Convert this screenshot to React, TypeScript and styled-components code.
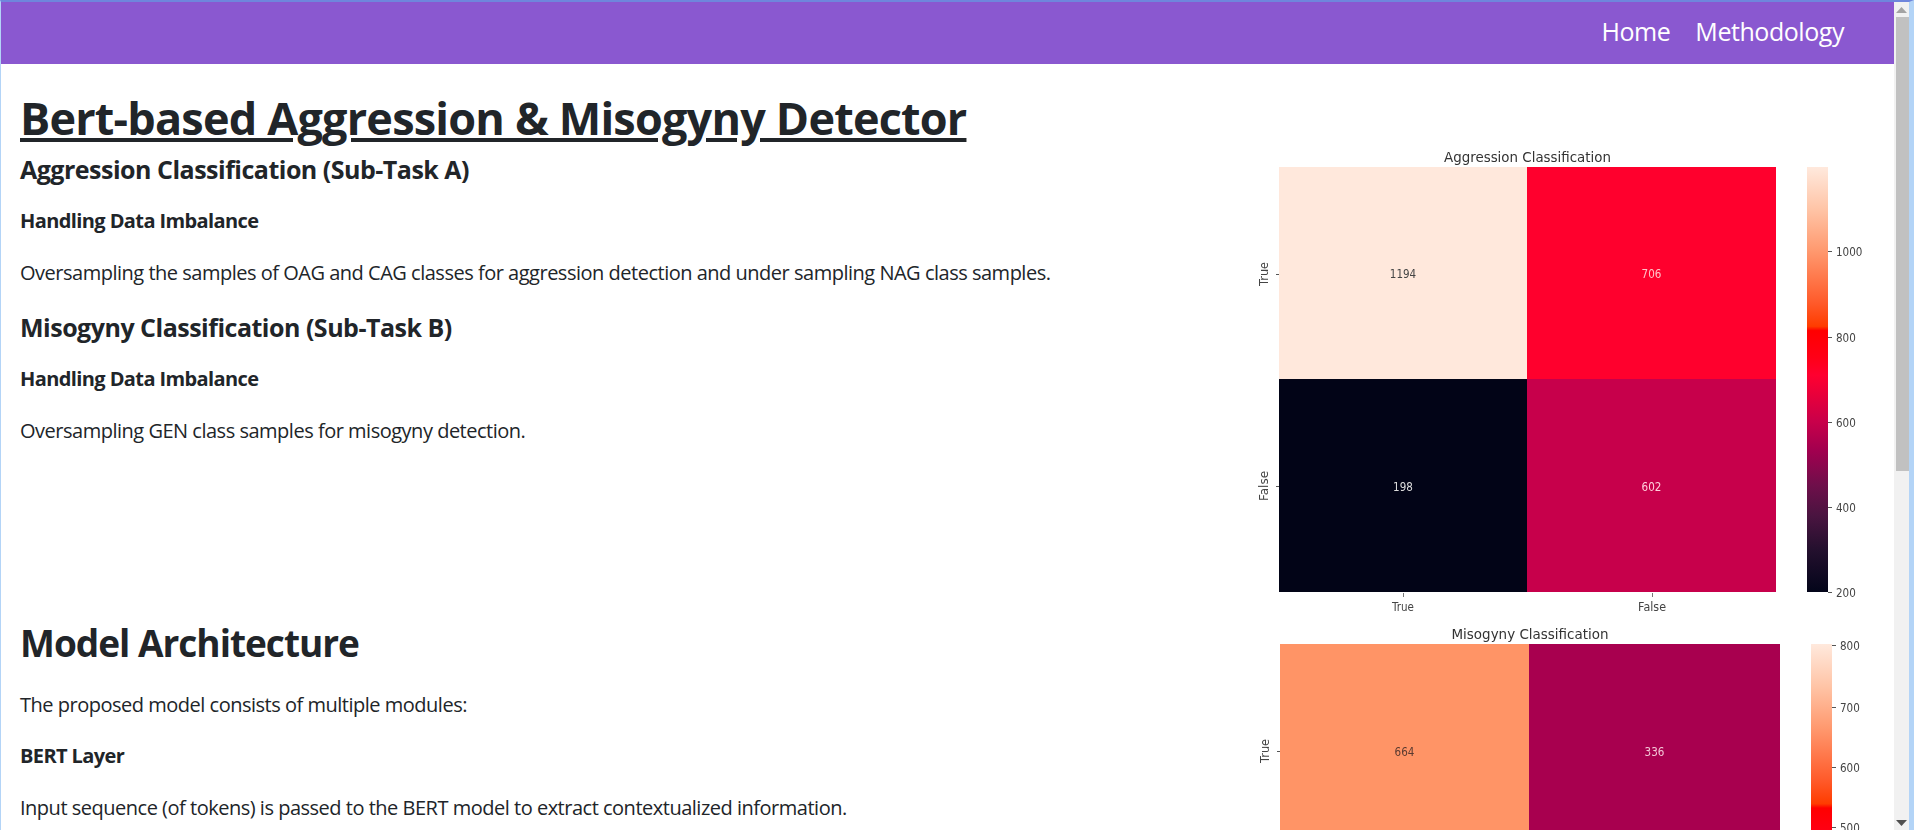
import React, { FC } from "react";
import styled, { createGlobalStyle } from "styled-components";

const GlobalStyle = createGlobalStyle`
  html, body {
    margin: 0;
    padding: 0;
    height: 100%;
    overflow: hidden;
    background: #ffffff;
  }
  body {
    font-family: "Open Sans", "Noto Sans", "Liberation Sans", sans-serif;
    font-size: 20px;
    line-height: 1.5;
    color: #212529;
  }
`;

const Frame = styled.div`
  display: flex;
  height: 830px;
  box-sizing: border-box;
  overflow: hidden;
  border-top: 2px solid #6f86dc;
  border-left: 1px solid #b3d4f7;
  border-right: 5px solid #b3d4f7;
`;

const Page = styled.div`
  flex: 1;
  min-width: 0;
  overflow: hidden;
`;

const Navbar = styled.nav`
  height: 62px;
  box-sizing: border-box;
  display: flex;
  align-items: center;
  justify-content: flex-end;
  gap: 25px;
  padding: 0 50px 2px 0;
  background: #8a58d0;
`;

const NavLink = styled.a`
  color: #ffffff;
  font-size: 25px;
  letter-spacing: -0.45px;
  text-decoration: none;
`;

const Content = styled.main`
  padding: 27px 0 0 19px;
`;

const Row = styled.section<{ $height: number }>`
  display: grid;
  grid-template-columns: 1220px 650px;
  height: ${(p) => p.$height}px;
`;

const TextColumn = styled.div`
  min-width: 0;
`;

const FigureColumn = styled.div<{ $top: number }>`
  padding-top: ${(p) => p.$top}px;
`;

const Title = styled.h1`
  margin: 0 0 9px;
  font-size: 45px;
  line-height: 54px;
  font-weight: 700;
  letter-spacing: -0.8px;
  text-decoration: underline;
`;

const SectionTitle = styled.h2`
  margin: 1px 0 25px;
  font-size: 37px;
  line-height: 44px;
  font-weight: 700;
  letter-spacing: -1px;
`;

const TaskTitle = styled.h5`
  margin: 0 0 25px;
  font-size: 25px;
  line-height: 30px;
  font-weight: 700;
  letter-spacing: -0.5px;
`;

const SubTitle = styled.h6`
  margin: 0 0 25px;
  font-size: 20px;
  line-height: 24px;
  font-weight: 700;
  letter-spacing: -0.6px;
`;

const Paragraph = styled.p`
  margin: 0 0 24px;
  letter-spacing: -0.49px;
`;

const Scrollbar = styled.div`
  width: 15px;
  flex: none;
  display: flex;
  flex-direction: column;
  background: #f1f1f1;
`;

const ScrollButton = styled.div`
  height: 15px;
  flex: none;
  display: flex;
  align-items: center;
  justify-content: center;
`;

const ScrollThumb = styled.div`
  height: 454px;
  flex: none;
  margin-left: 2px;
  background: #c1c1c1;
`;

const ScrollTrack = styled.div`
  flex: 1;
`;

const Chart = styled.svg`
  display: block;
  overflow: hidden;
  font-family: "DejaVu Sans", sans-serif;
`;

const ChartText = styled.g`
  filter: blur(0.35px);
`;

interface Cell {
  value: string;
  fill: string;
  ink: string;
  x: number;
  y: number;
  w: number;
  h: number;
}

interface Tick {
  y: number;
  label: string;
}

interface HeatmapProps {
  id: string;
  title: string;
  titleWidth: number;
  height: number;
  top: number;
  left: number;
  right: number;
  barX: number;
  barHeight: number;
  rowLabels: { y: number; label: string }[];
  colLabels: { x: number; label: string; w: number }[];
  axisY?: number;
  cells: Cell[];
  ticks: Tick[];
}

const ramp: [number, string][] = [
  [0, "#ffe9dd"],
  [0.1, "#ffc4a6"],
  [0.195, "#ff9a70"],
  [0.32, "#ff5a2a"],
  [0.375, "#ff3c00"],
  [0.385, "#ff0000"],
  [0.45, "#ff0018"],
  [0.49, "#ff0030"],
  [0.6, "#c8004a"],
  [0.67, "#a0004f"],
  [0.75, "#6e0f4a"],
  [0.82, "#4a1440"],
  [0.9, "#24102e"],
  [1, "#03051a"],
];

const Heatmap: FC<HeatmapProps> = ({
  id,
  title,
  titleWidth,
  height,
  top,
  left,
  right,
  barX,
  barHeight,
  rowLabels,
  colLabels,
  axisY,
  cells,
  ticks,
}) => (
  <Chart width={650} height={height} viewBox={`0 0 650 ${height}`}>
    <defs>
      <linearGradient id={id} x1="0" y1="0" x2="0" y2="1">
        {ramp.map(([o, c]) => (
          <stop key={o} offset={o} stopColor={c} />
        ))}
      </linearGradient>
    </defs>
    {cells.map((c) => (
      <rect key={c.value} x={c.x} y={c.y} width={c.w} height={c.h} fill={c.fill} />
    ))}
    <rect x={barX} y={top} width={21} height={barHeight} fill={`url(#${id})`} />
    {rowLabels.map((r) => (
      <rect key={r.label} x={left - 3} y={r.y} width={3} height={1} fill="#555" />
    ))}
    {colLabels.map((c) => (
      <rect key={c.label} x={c.x} y={(axisY ?? 0) + 1} width={1} height={4} fill="#777" />
    ))}
    {ticks.map((t) => (
      <rect key={t.label} x={barX + 21} y={t.y} width={4} height={1} fill="#555" />
    ))}
    <ChartText>
      <text
        x={(left + right) / 2}
        y={top - 5}
        fontSize={14}
        fill="#333"
        textAnchor="middle"
        textLength={titleWidth}
        lengthAdjust="spacingAndGlyphs"
      >
        {title}
      </text>
      {cells.map((c) => (
        <text
          key={c.value}
          x={c.x + c.w / 2}
          y={c.y + c.h / 2 + 5}
          fontSize={13}
          fill={c.ink}
          textAnchor="middle"
          textLength={c.value.length * 6.6}
          lengthAdjust="spacingAndGlyphs"
        >
          {c.value}
        </text>
      ))}
      {rowLabels.map((r) => (
        <text
          key={r.label}
          transform={`translate(${left - 11} ${r.y}) rotate(-90)`}
          fontSize={13}
          fill="#444"
          textAnchor="middle"
          textLength={r.label.length * 6}
          lengthAdjust="spacingAndGlyphs"
        >
          {r.label}
        </text>
      ))}
      {colLabels.map((c) => (
        <text
          key={c.label}
          x={c.x}
          y={(axisY ?? 0) + 19}
          fontSize={13}
          fill="#444"
          textAnchor="middle"
          textLength={c.w}
          lengthAdjust="spacingAndGlyphs"
        >
          {c.label}
        </text>
      ))}
      {ticks.map((t) => (
        <text
          key={t.label}
          x={barX + 29}
          y={t.y + 5}
          fontSize={13}
          fill="#444"
          textLength={t.label.length * 6.6}
          lengthAdjust="spacingAndGlyphs"
        >
          {t.label}
        </text>
      ))}
    </ChartText>
  </Chart>
);

export default function App() {
  return (
    <>
      <GlobalStyle />
      <Frame>
        <Page>
          <Navbar>
            <NavLink href="#">Home</NavLink>
            <NavLink href="#">Methodology</NavLink>
          </Navbar>
          <Content>
            <Row $height={529}>
              <TextColumn>
                <Title>Bert-based Aggression &amp; Misogyny Detector</Title>
                <TaskTitle>Aggression Classification (Sub-Task A)</TaskTitle>
                <SubTitle>Handling Data Imbalance</SubTitle>
                <Paragraph>
                  Oversampling the samples of OAG and CAG classes for aggression detection and under
                  sampling NAG class samples.
                </Paragraph>
                <TaskTitle>Misogyny Classification (Sub-Task B)</TaskTitle>
                <SubTitle>Handling Data Imbalance</SubTitle>
                <Paragraph>Oversampling GEN class samples for misogyny detection.</Paragraph>
              </TextColumn>
              <FigureColumn $top={54}>
                <Heatmap
                  id="aggression"
                  title="Aggression Classification"
                  titleWidth={167}
                  height={475}
                  top={22}
                  left={39}
                  right={536}
                  barX={567}
                  barHeight={425}
                  axisY={447}
                  rowLabels={[
                    { y: 129, label: "True" },
                    { y: 341, label: "False" },
                  ]}
                  colLabels={[
                    { x: 163, label: "True", w: 22 },
                    { x: 412, label: "False", w: 28 },
                  ]}
                  cells={[
                    { value: "1194", fill: "#ffe8dc", ink: "#444", x: 39, y: 22, w: 248, h: 212 },
                    { value: "706", fill: "#ff002d", ink: "#ffc4c8", x: 287, y: 22, w: 249, h: 212 },
                    { value: "198", fill: "#020417", ink: "#ddd", x: 39, y: 234, w: 248, h: 213 },
                    { value: "602", fill: "#c7004b", ink: "#ffd0dc", x: 287, y: 234, w: 249, h: 213 },
                  ]}
                  ticks={[
                    { y: 106, label: "1000" },
                    { y: 192, label: "800" },
                    { y: 277, label: "600" },
                    { y: 362, label: "400" },
                    { y: 447, label: "200" },
                  ]}
                />
              </FigureColumn>
            </Row>
            <Row $height={300}>
              <TextColumn>
                <SectionTitle>Model Architecture</SectionTitle>
                <Paragraph>The proposed model consists of multiple modules:</Paragraph>
                <SubTitle>BERT Layer</SubTitle>
                <Paragraph>
                  Input sequence (of tokens) is passed to the BERT model to extract contextualized
                  information.
                </Paragraph>
              </TextColumn>
              <FigureColumn $top={0}>
                <Heatmap
                  id="misogyny"
                  title="Misogyny Classification"
                  titleWidth={157}
                  height={260}
                  top={24}
                  left={40}
                  right={540}
                  barX={571}
                  barHeight={426}
                  rowLabels={[{ y: 131, label: "True" }]}
                  colLabels={[]}
                  cells={[
                    { value: "664", fill: "#ff9466", ink: "#5a3a30", x: 40, y: 24, w: 249, h: 214 },
                    { value: "336", fill: "#a8004f", ink: "#f3c6d6", x: 289, y: 24, w: 251, h: 214 },
                  ]}
                  ticks={[
                    { y: 25, label: "800" },
                    { y: 87, label: "700" },
                    { y: 147, label: "600" },
                    { y: 207, label: "500" },
                  ]}
                />
              </FigureColumn>
            </Row>
          </Content>
        </Page>
        <Scrollbar>
          <ScrollButton>
            <svg width="11" height="6" viewBox="0 0 11 6">
              <path d="M5.5 0 L11 6 L0 6 Z" fill="#a3a3a3" />
            </svg>
          </ScrollButton>
          <ScrollThumb />
          <ScrollTrack />
          <ScrollButton>
            <svg width="11" height="6" viewBox="0 0 11 6">
              <path d="M0 0 L11 0 L5.5 6 Z" fill="#505050" />
            </svg>
          </ScrollButton>
        </Scrollbar>
      </Frame>
    </>
  );
}
